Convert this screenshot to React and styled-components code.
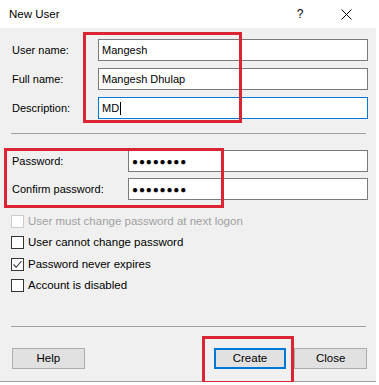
import React from 'react';
import styled, { createGlobalStyle } from 'styled-components';

const GlobalStyle = createGlobalStyle`
  html, body {
    margin: 0;
    padding: 0;
    background: #ffffff;
  }
  body {
    font-family: "Liberation Sans", Arial, sans-serif;
    font-size: 11px;
    color: #000;
  }
`;

const Dialog = styled.div`
  position: relative;
  width: 376px;
  height: 381px;
  background: #f0f0f0;
  border-bottom: 1px solid #a0a0a0;
  display: flex;
  flex-direction: column;
`;

const TitleBar = styled.div`
  height: 28px;
  background: #ffffff;
  display: flex;
  align-items: center;
  padding-left: 9px;
`;

const Title = styled.div`
  flex: 1;
  font-size: 11.5px;
`;

const TitleButton = styled.div`
  width: ${(p) => p.$w}px;
  height: 28px;
  display: flex;
  align-items: center;
  justify-content: center;
  font-size: 12px;
`;

const Body = styled.div`
  padding: 11px 8px 0 12px;
  display: flex;
  flex-direction: column;
`;

const FieldGrid = styled.div`
  display: grid;
  grid-template-columns: ${(p) => p.$label}px 1fr;
  grid-auto-rows: 22px;
  row-gap: ${(p) => p.$gap}px;
  align-items: center;
  margin-top: ${(p) => p.$top || 0}px;
`;

const Label = styled.div`
  white-space: nowrap;
`;

const Field = styled.div`
  height: 22px;
  box-sizing: border-box;
  border: 1px solid ${(p) => (p.$focus ? '#0078d7' : '#7a7a7a')};
  background: #fff;
  display: flex;
  align-items: center;
  padding-left: 3px;
  white-space: nowrap;
`;

const Dots = styled.span`
  font-size: 10px;
  letter-spacing: 0.85px;
  padding-top: 1px;
`;

const Caret = styled.span`
  display: inline-block;
  width: 1px;
  height: 13px;
  background: #000;
  margin-left: 1px;
`;

const Separator = styled.div`
  height: 1px;
  background: #a0a0a0;
  margin: ${(p) => p.$top}px 2px 0 -1px;
`;

const CheckList = styled.div`
  margin-top: 15px;
  display: flex;
  flex-direction: column;
`;

const CheckRow = styled.div`
  height: 21.4px;
  display: flex;
  align-items: flex-start;
  margin-left: -1px;
  color: ${(p) => (p.$disabled ? '#a0a0a0' : '#000')};
`;

const Box = styled.span`
  width: 13px;
  height: 13px;
  box-sizing: border-box;
  border: 1px solid ${(p) => (p.$disabled ? '#cccccc' : '#333333')};
  background: #fff;
  display: flex;
  align-items: center;
  justify-content: center;
  margin-right: 4px;
  flex-shrink: 0;
`;

const CheckText = styled.span`
  line-height: 13px;
  font-size: 11.5px;
`;

const ButtonRow = styled.div`
  margin-top: 21px;
  display: flex;
  gap: 8px;
  padding-right: 1px;
`;

const Button = styled.div`
  width: 73px;
  height: 21px;
  box-sizing: border-box;
  background: #e1e1e1;
  border: 1px solid ${(p) => (p.$primary ? '#0078d7' : '#adadad')};
  box-shadow: ${(p) => (p.$primary ? 'inset 0 0 0 1px #0078d7' : 'none')};
  display: flex;
  align-items: center;
  justify-content: center;
  font-size: 11.5px;
  margin-left: ${(p) => p.$ml || 0}px;
`;

const Highlight = styled.div`
  position: absolute;
  left: ${(p) => p.$x}px;
  top: ${(p) => p.$y}px;
  width: ${(p) => p.$w}px;
  height: ${(p) => p.$h}px;
  box-sizing: border-box;
  border: 3px solid #dc2532;
  pointer-events: none;
`;

const CloseIcon = () => (
  <svg width="11" height="11" viewBox="0 0 11 11">
    <path d="M0.5 0.5 L10.5 10.5 M10.5 0.5 L0.5 10.5" stroke="#000" strokeWidth="1" fill="none" />
  </svg>
);

const CheckMark = () => (
  <svg width="11" height="11" viewBox="0 0 11 11">
    <path d="M1.5 5.5 L4.2 8.3 L9.5 2" stroke="#333" strokeWidth="1.1" fill="none" />
  </svg>
);

const checks = [
  { text: 'User must change password at next logon', disabled: true },
  { text: 'User cannot change password' },
  { text: 'Password never expires', checked: true },
  { text: 'Account is disabled' },
];

export default function App() {
  return (
    <>
      <GlobalStyle />
      <Dialog>
        <TitleBar>
          <Title>New User</Title>
          <TitleButton $w={46}>?</TitleButton>
          <TitleButton $w={46}>
            <CloseIcon />
          </TitleButton>
          <TitleButton $w={7} />
        </TitleBar>
        <Body>
          <FieldGrid $label={86} $gap={7}>
            <Label>User name:</Label>
            <Field>Mangesh</Field>
            <Label>Full name:</Label>
            <Field>Mangesh Dhulap</Field>
            <Label>Description:</Label>
            <Field $focus>
              MD
              <Caret />
            </Field>
          </FieldGrid>
          <Separator $top={14} />
          <FieldGrid $label={116} $gap={6} $top={16}>
            <Label>Password:</Label>
            <Field>
              <Dots>●●●●●●●●</Dots>
            </Field>
            <Label>Confirm password:</Label>
            <Field>
              <Dots>●●●●●●●●</Dots>
            </Field>
          </FieldGrid>
          <CheckList>
            {checks.map((c) => (
              <CheckRow key={c.text} $disabled={c.disabled}>
                <Box $disabled={c.disabled}>{c.checked && <CheckMark />}</Box>
                <CheckText>{c.text}</CheckText>
              </CheckRow>
            ))}
          </CheckList>
          <Separator $top={25} />
          <ButtonRow>
            <Button>Help</Button>
            <Button $primary $ml={121}>
              Create
            </Button>
            <Button>Close</Button>
          </ButtonRow>
        </Body>
        <Highlight $x={83} $y={32} $w={159} $h={91} />
        <Highlight $x={4} $y={148} $w={220} $h={60} />
        <Highlight $x={202} $y={336} $w={92} $h={48} />
      </Dialog>
    </>
  );
}
